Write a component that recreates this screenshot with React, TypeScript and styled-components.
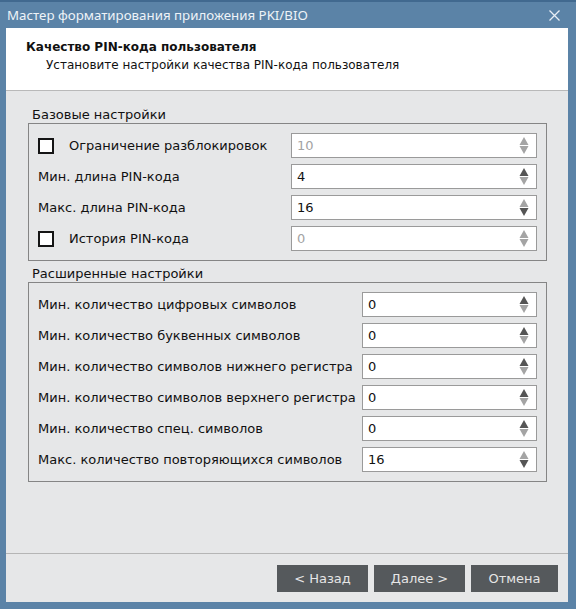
import React from "react";
import styled, { createGlobalStyle } from "styled-components";

const Global = createGlobalStyle`
  html, body { margin: 0; padding: 0; background: #5b83a7; }
  body { font-family: "DejaVu Sans", "Noto Sans", sans-serif; }
  * { box-sizing: border-box; }
`;

const Window = styled.div`
  width: 576px;
  height: 609px;
  background: #5b83a7;
  border-top: 2px solid #41698f;
  display: flex;
  flex-direction: column;
`;

const TitleBar = styled.div`
  height: 26px;
  display: flex;
  align-items: center;
  justify-content: space-between;
  padding: 0 16px 0 7px;
  color: #eef3f8;
  font-family: "Noto Sans", "DejaVu Sans", sans-serif;
  font-size: 13.3px;
`;

const Client = styled.div`
  flex: 1;
  margin: 0 8px 7px 6px;
  background: #e6e7e8;
  display: flex;
  flex-direction: column;
`;

const Header = styled.div`
  height: 63px;
  background: #ffffff;
  border-bottom: 1px solid #b9b9b9;
  padding: 10px 0 0 20px;
  display: flex;
  flex-direction: column;
`;

const HeaderTitle = styled.div`
  font-weight: bold;
  font-size: 12px;
  line-height: 18px;
  color: #111;
`;

const HeaderSub = styled.div`
  font-size: 12px;
  line-height: 18px;
  padding-left: 20px;
  color: #111;
`;

const Body = styled.div`
  flex: 1;
  padding: 16px 21px 0 22px;
  display: flex;
  flex-direction: column;
`;

const GroupTitle = styled.div<{ $top?: number }>`
  font-size: 13px;
  line-height: 16px;
  color: #111;
  padding-left: 4px;
  margin-top: ${(p) => p.$top ?? 0}px;
`;

const GroupBox = styled.div`
  border: 1px solid #858585;
  padding: 9px 9px 9px 9px;
  display: flex;
  flex-direction: column;
  gap: 6px;
`;

const Row = styled.div`
  height: 25px;
  display: flex;
  align-items: center;
  justify-content: space-between;
`;

const Label = styled.label`
  display: flex;
  align-items: center;
  font-size: 13px;
  color: #111;
  white-space: nowrap;
`;

const Check = styled.span`
  width: 16px;
  height: 16px;
  border: 2px solid #151515;
  background: #fff;
  margin-right: 15px;
  display: inline-block;
`;

const Spin = styled.div<{ $w: number; $disabled?: boolean }>`
  width: ${(p) => p.$w}px;
  height: 25px;
  background: #fff;
  border: 1px solid #9a9a9a;
  display: flex;
  align-items: center;
  justify-content: space-between;
  padding: 0 7px 0 5px;
  font-size: 13px;
  color: ${(p) => (p.$disabled ? "#a3a3a3" : "#111")};
`;

const Footer = styled.div`
  border-top: 1px solid #b5b5b5;
  padding: 11px 10px 10px 0;
  display: flex;
  justify-content: flex-end;
  gap: 6px;
`;

const Button = styled.button<{ $w: number }>`
  width: ${(p) => p.$w}px;
  height: 27px;
  background: #55595c;
  color: #e6e6e6;
  border: none;
  font-family: "DejaVu Sans", sans-serif;
  font-size: 13px;
  padding: 0;
`;

const LIGHT = "#a4a4a4";
const DARK = "#555555";

type ArrowState = "disabled" | "min" | "max";

const Arrows: React.FC<{ state: ArrowState }> = ({ state }) => {
  const up = state === "min" ? DARK : LIGHT;
  const down = state === "max" ? DARK : LIGHT;
  return (
    <svg width="10" height="17" viewBox="0 0 10 17">
      <polygon points="5,0 9.5,8 0.5,8" fill={up} />
      <polygon points="0.5,9 9.5,9 5,17" fill={down} />
    </svg>
  );
};

const SpinBox: React.FC<{ value: string; w: number; state: ArrowState }> = ({ value, w, state }) => (
  <Spin $w={w} $disabled={state === "disabled"}>
    <span>{value}</span>
    <Arrows state={state} />
  </Spin>
);

const basic: { label: string; check?: boolean; value: string; state: ArrowState }[] = [
  { label: "Ограничение разблокировок", check: true, value: "10", state: "disabled" },
  { label: "Мин. длина PIN-кода", value: "4", state: "min" },
  { label: "Макс. длина PIN-кода", value: "16", state: "max" },
  { label: "История PIN-кода", check: true, value: "0", state: "disabled" },
];

const advanced: { label: string; value: string; state: ArrowState }[] = [
  { label: "Мин. количество цифровых символов", value: "0", state: "min" },
  { label: "Мин. количество буквенных символов", value: "0", state: "min" },
  { label: "Мин. количество символов нижнего регистра", value: "0", state: "min" },
  { label: "Мин. количество символов верхнего регистра", value: "0", state: "min" },
  { label: "Мин. количество спец. символов", value: "0", state: "min" },
  { label: "Макс. количество повторяющихся символов", value: "16", state: "max" },
];

export default function App() {
  return (
    <>
      <Global />
      <Window>
        <TitleBar>
          <span>Мастер форматирования приложения PKI/BIO</span>
          <svg width="11" height="11" viewBox="0 0 11 11">
            <path d="M0.5 0.5 L10.5 10.5 M10.5 0.5 L0.5 10.5" stroke="#e8eef5" strokeWidth="1.3" />
          </svg>
        </TitleBar>
        <Client>
          <Header>
            <HeaderTitle>Качество PIN-кода пользователя</HeaderTitle>
            <HeaderSub>Установите настройки качества PIN-кода пользователя</HeaderSub>
          </Header>
          <Body>
            <GroupTitle>Базовые настройки</GroupTitle>
            <GroupBox>
              {basic.map((r) => (
                <Row key={r.label}>
                  <Label>
                    {r.check && <Check />}
                    {r.label}
                  </Label>
                  <SpinBox value={r.value} w={246} state={r.state} />
                </Row>
              ))}
            </GroupBox>
            <GroupTitle $top={5}>Расширенные настройки</GroupTitle>
            <GroupBox>
              {advanced.map((r) => (
                <Row key={r.label}>
                  <Label>{r.label}</Label>
                  <SpinBox value={r.value} w={175} state={r.state} />
                </Row>
              ))}
            </GroupBox>
          </Body>
          <Footer>
            <Button $w={91}>&lt; Назад</Button>
            <Button $w={91}>Далее &gt;</Button>
            <Button $w={87}>Отмена</Button>
          </Footer>
        </Client>
      </Window>
    </>
  );
}
